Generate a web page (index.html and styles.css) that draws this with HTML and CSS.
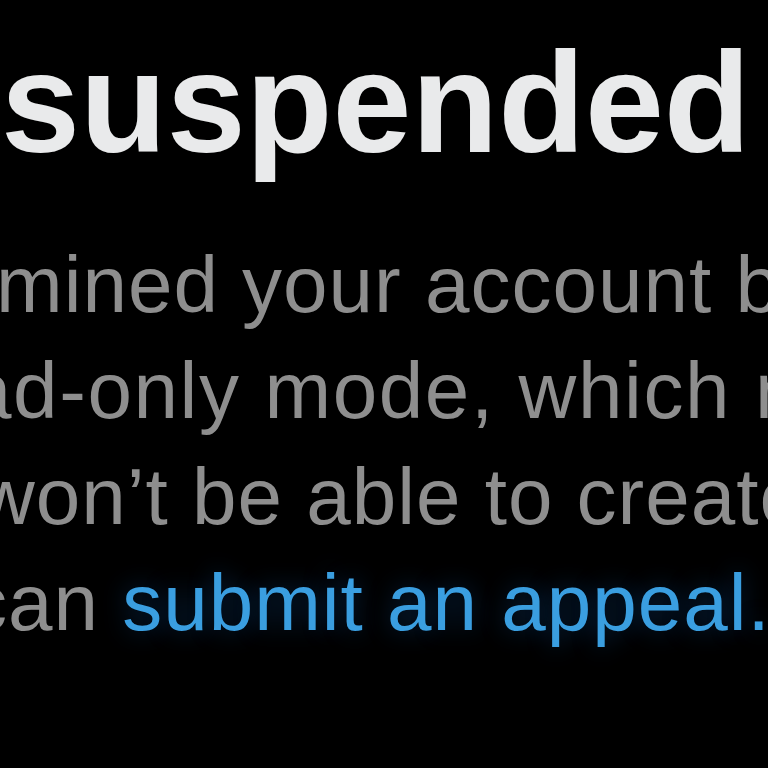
FILE: index.html
```html
<!DOCTYPE html>
<html lang="en">
<head>
<meta charset="utf-8">
<title>Account suspended</title>
<link rel="stylesheet" href="styles.css">
</head>
<body>
<main class="notice">
  <h1 class="title">suspended</h1>
  <p class="message">
    <span class="line l1">mined your account broke the Rules.</span>
    <span class="line l2">ad-only mode, which means you</span>
    <span class="line l3">won’t be able to create new posts.</span>
    <span class="line l4">can <a class="link" href="#">submit an appeal.</a></span>
  </p>
</main>
</body>
</html>
```
FILE: styles.css
```css
html, body {
  margin: 0;
  padding: 0;
  background: #000;
  width: 768px;
  height: 768px;
  overflow: hidden;
}

.notice {
  display: flex;
  flex-direction: column;
  font-family: "Liberation Sans", Arial, sans-serif;
}

.title {
  margin: 0;
  padding-top: 17px;
  padding-left: 1px;
  font-size: 142px;
  line-height: 172px;
  font-weight: 700;
  color: #e9eaeb;
  white-space: nowrap;
}

.message {
  margin: 43px 0 0 0;
  font-size: 80px;
  line-height: 106px;
  letter-spacing: 1px;
  color: #8e8e8e;
}

.line {
  display: block;
  white-space: nowrap;
}

.l1 { margin-left: -4px; }
.l2 { margin-left: -33px; letter-spacing: 1.6px; }
.l3 { margin-left: -23px; }
.l4 { margin-left: -33px; }

.link {
  color: #3a9ee0;
  text-decoration: none;
  text-shadow: 0 0 24px rgba(20, 90, 170, 0.45);
}
```
